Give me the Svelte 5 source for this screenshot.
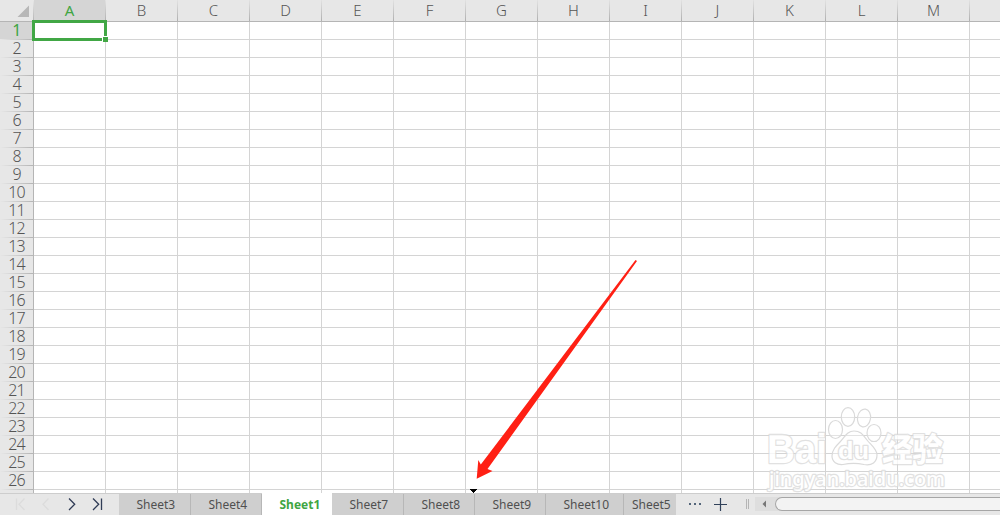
<script>
  const columns = "ABCDEFGHIJKLMN".split("");
  const rows = Array.from({ length: 27 }, (_, i) => i + 1);

  let activeSheet = "Sheet1";
  let selectedColumn = "A";
  let selectedRow = 1;

  const sheets = [
    { name: "Sheet3", width: 72 },
    { name: "Sheet4", width: 71 },
    { name: "Sheet1", width: 70 },
    { name: "Sheet7", width: 72 },
    { name: "Sheet8", width: 71 },
    { name: "Sheet9", width: 71 },
    { name: "Sheet10", width: 78 },
    { name: "Sheet5", width: 52 },
  ];
</script>

<div class="app">
  <div class="columns">
    <div class="corner">
      <svg width="34" height="21"><path d="M29 5.5V17H17.5Z" fill="#b7b7b7" /></svg>
    </div>
    {#each columns as column}
      <div class="column" class:selected={column === selectedColumn}>
        <span>{column === "N" ? "" : column}</span>
      </div>
    {/each}
  </div>

  <div class="sheet">
    <div class="rows">
      {#each rows as row}
        <div class="row" class:selected={row === selectedRow}>
          {row === 27 ? "" : row}
        </div>
      {/each}
    </div>
    <div class="cells"></div>
  </div>

  <div class="bottom">
    <svg class="nav" width="119" height="21" fill="none" stroke-width="1.3">
      <g stroke="#dcdcdc">
        <path d="M16.5 4.5V16M24.5 4.5L19 10.2L24.5 16" />
        <path d="M48.5 4.5L43 10.2L48.5 16" />
      </g>
      <g stroke="#303c56">
        <path d="M69 4.5L74.7 10.2L69 16" />
        <path d="M93 4.5L98.7 10.2L93 16M101.5 4.5V16" />
      </g>
    </svg>
    <div class="tabs">
      {#each sheets as sheet}
        <button
          class="tab"
          class:active={sheet.name === activeSheet}
          class:last={sheet.name === "Sheet5"}
          style="width: {sheet.width}px"
          on:click={() => (activeSheet = sheet.name)}>{sheet.name}</button
        >
      {/each}
    </div>
    <svg class="tools" width="79" height="21">
      <path d="M13 9h2v2h-2zM18 9h2v2h-2zM23 9h2v2h-2z" fill="#53657a" />
      <path d="M38 10.5H51M44.5 4V17" stroke="#30415a" stroke-width="1.2" />
      <path d="M70.5 5V15M72.5 5V15" stroke="#b5b5b5" />
    </svg>
    <div class="scroll">
      <svg width="20" height="21"><path d="M7.5 10L11 6.5V13.5Z" fill="#777" /></svg>
      <div class="thumb"></div>
    </div>
  </div>

  <div class="selection"></div>
  <div class="handle"></div>

  <svg class="overlay" width="1000" height="515">
    <path d="M470 489H477V490H476V491H475V492H474V493H473V492H472V491H471V490H470Z" fill="#000" />
    <path
      d="M635.5 260L637 261L487.5 469L492.5 471L476.7 478.7L478.3 460L480.8 464.5Z"
      fill="#ff2014"
    />
    <g class="watermark">
      <text class="logo" x="767" y="463" textLength="60" lengthAdjust="spacingAndGlyphs">Bai</text>
      <ellipse cx="835.5" cy="429.5" rx="7" ry="9" />
      <ellipse cx="848" cy="417" rx="6.7" ry="9.3" />
      <ellipse cx="864" cy="418" rx="6.5" ry="9" transform="rotate(10 864 418)" />
      <ellipse cx="874" cy="433" rx="7" ry="8.5" />
      <path
        d="M854 431C847 431 845 437 840 442C836 446 832 450 832 456C832 462 837 465 843 464.5C850 463 857 463 864 464.5C872 466 877 462 877 455C877 449 871 445 867 440C863 435 861 431 854 431Z"
      />
      <text class="du" x="838" y="459" textLength="31" lengthAdjust="spacingAndGlyphs">du</text>
      <text class="hanzi" x="882" y="461" textLength="61" lengthAdjust="spacingAndGlyphs">经验</text>
      <text class="url" x="769" y="486" textLength="176" lengthAdjust="spacingAndGlyphs"
        >jingyan.baidu.com</text
      >
    </g>
  </svg>
</div>

<style>
  .app {
    position: relative;
    display: flex;
    flex-direction: column;
    width: 1000px;
    height: 515px;
    overflow: hidden;
    background: #fff;
    font-family: "Noto Sans", "Open Sans", sans-serif;
  }
  svg {
    display: block;
    flex: none;
  }
  .columns {
    display: flex;
    flex: none;
    height: 21px;
    border-bottom: 1px solid #b5b5b5;
    background: #e7e7e7;
    overflow: hidden;
  }
  .corner {
    flex: none;
    width: 34px;
    background: linear-gradient(#e7e7e7, #b5b5b5) right / 1px 100% no-repeat;
  }
  .column {
    flex: none;
    box-sizing: border-box;
    width: 72px;
    padding-right: 1px;
    line-height: 21px;
    text-align: center;
    font-size: 15px;
    font-weight: 300;
    color: #555;
    background: linear-gradient(#e2e2e2, #b0b0b0) right / 1px 100% no-repeat;
  }
  .column.selected {
    background-color: #d5d5d5;
    color: #3fa543;
    font-weight: 400;
  }
  .sheet {
    display: flex;
    flex: none;
    height: 471px;
    overflow: hidden;
  }
  .rows {
    flex: none;
    width: 33px;
    border-right: 1px solid #b5b5b5;
    background: #e7e7e7;
  }
  .row {
    height: 18px;
    line-height: 17px;
    text-align: center;
    font-size: 16px;
    font-weight: 300;
    letter-spacing: -0.9px;
    color: #555;
    background: linear-gradient(to right, #e7e7e7, #b5b5b5) bottom / 100% 1px no-repeat;
  }
  .row.selected {
    background-color: #d5d5d5;
    color: #3fa543;
    font-weight: 400;
  }
  .cells {
    flex: 1;
    background:
      repeating-linear-gradient(to right, transparent 0 71px, #d4d4d4 71px 72px),
      repeating-linear-gradient(to bottom, transparent 0 17px, #d4d4d4 17px 18px);
  }
  .bottom {
    display: flex;
    flex: none;
    height: 22px;
    box-sizing: border-box;
    border-top: 1px solid #cdcdcd;
    background: #e7e7e7;
  }
  .tabs {
    display: flex;
    flex: none;
    width: 557px;
  }
  .tab {
    flex: none;
    box-sizing: border-box;
    height: 21px;
    margin: 0;
    padding: 0 0 0 17.5px;
    border: none;
    border-right: 1px solid #b7b7b7;
    background: #cfcfcf;
    color: #505050;
    font: 12px/21px "Noto Sans", sans-serif;
    text-align: left;
    white-space: nowrap;
  }
  .tab.active {
    height: 22px;
    margin-top: -1px;
    padding-top: 1px;
    border-right: none;
    background: #fff;
    color: #3fa543;
    font-weight: 700;
  }
  .tab.last {
    padding-left: 8px;
    border-right: none;
  }
  .scroll {
    display: flex;
    flex: 1;
    height: 14px;
    margin-top: 3px;
    background: #dedede;
  }
  .scroll svg {
    margin-top: -3px;
  }
  .thumb {
    flex: 1;
    box-sizing: border-box;
    border: 1px solid #a6a6a6;
    border-right: none;
    border-radius: 7px 0 0 7px;
    background: #f3f3f3;
  }
  .selection {
    position: absolute;
    left: 32px;
    top: 20px;
    width: 69px;
    height: 15px;
    border: 3px solid #41a745;
  }
  .handle {
    position: absolute;
    left: 102px;
    top: 36px;
    width: 5px;
    height: 5px;
    border: 1px solid #fff;
    border-right: none;
    border-bottom: none;
    background: #41a745;
  }
  .overlay {
    position: absolute;
    left: 0;
    top: 0;
    pointer-events: none;
  }
  .watermark {
    fill: rgba(255, 255, 255, 0.35);
    stroke: #dadada;
    stroke-width: 1.2;
  }
  .watermark text {
    fill: #fff;
    stroke-width: 2.4;
    stroke-linejoin: round;
    paint-order: stroke;
    opacity: 0.8;
  }
  .logo {
    font: 700 40px "Liberation Sans", sans-serif;
  }
  .du {
    font: 700 23px "Liberation Sans", sans-serif;
  }
  .hanzi {
    font: 900 32px "Noto Sans CJK SC", sans-serif;
  }
  .url {
    font: 500 19px "Noto Sans", sans-serif;
  }
</style>
